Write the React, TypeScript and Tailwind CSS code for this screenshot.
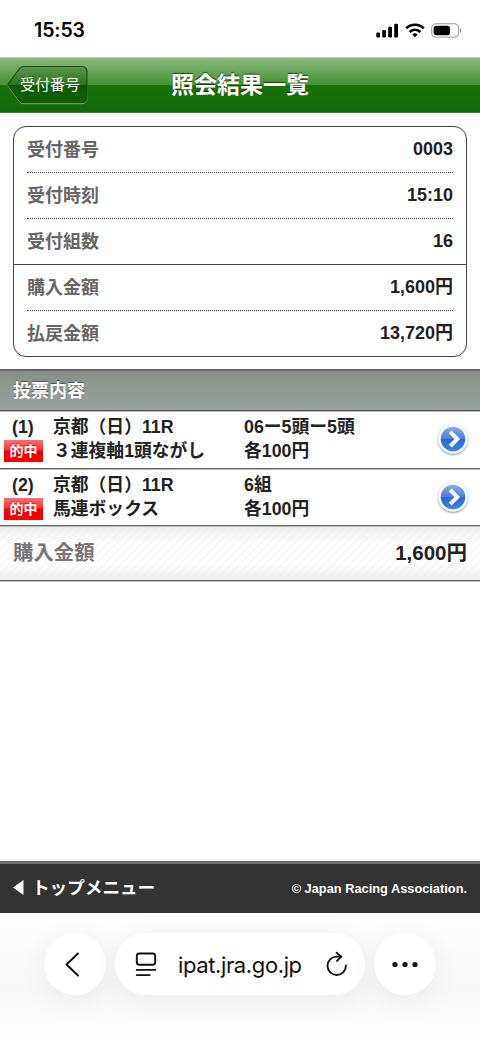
import { useState } from 'react';

interface SummaryItem {
  label: string;
  value: string;
}

interface Bet {
  no: number;
  race: string;
  type: string;
  selection: string;
  amount: string;
}

const receipt: SummaryItem[] = [
  { label: '受付番号', value: '0003' },
  { label: '受付時刻', value: '15:10' },
  { label: '受付組数', value: '16' },
];

const money: SummaryItem[] = [
  { label: '購入金額', value: '1,600円' },
  { label: '払戻金額', value: '13,720円' },
];

const bets: Bet[] = [
  { no: 1, race: '京都（日）11R', type: '３連複軸1頭ながし', selection: '06ー5頭ー5頭', amount: '各100円' },
  { no: 2, race: '京都（日）11R', type: '馬連ボックス', selection: '6組', amount: '各100円' },
];

const StatusBar = () => (
  <div className="flex h-[57px] items-center justify-between pt-[3px] pr-[18px] pl-[34px]">
    <span className="pt-px font-['Inter',sans-serif] text-[19.5px] leading-none font-semibold tracking-[-0.1px] text-black">15:53</span>
    <div className="flex items-center gap-[6px]">
      <svg width="23" height="15" viewBox="0 0 23 15" fill="#000">
        <rect x="0.3" y="9.4" width="3.8" height="5" rx="1.2" />
        <rect x="6.2" y="7" width="3.8" height="7.4" rx="1.2" />
        <rect x="12.2" y="3.8" width="3.8" height="10.6" rx="1.2" />
        <rect x="18.2" y="0.8" width="3.8" height="13.6" rx="1.2" />
      </svg>
      <svg width="20" height="15" viewBox="0 0 20 15" fill="none" stroke="#000" strokeWidth="2.6">
        <path d="M1.2 5.4a12.4 12.4 0 0 1 17.6 0" />
        <path d="M4.6 9a7.6 7.6 0 0 1 10.8 0" />
        <path d="M10 14.3l-2.8-2.8a4 4 0 0 1 5.6 0z" fill="#000" stroke="none" />
      </svg>
      <svg width="31" height="15" viewBox="0 0 31 15" fill="none">
        <rect x="0.7" y="0.8" width="27" height="13.4" rx="4.4" stroke="#9a9a9a" strokeWidth="1.1" />
        <rect x="2.6" y="2.7" width="16.4" height="9.6" rx="2.8" fill="#000" />
        <path d="M29 5.2v4.6c1.7-.7 1.7-3.9 0-4.6z" fill="#8a8a8a" />
      </svg>
    </div>
  </div>
);

const Header = () => (
  <header className="relative flex h-[56px] items-center justify-center border-t border-b border-t-[#b5d3ae] border-b-[#56714f] bg-[linear-gradient(180deg,#89ba7e_0%,#43912f_50%,#187209_50%,#126a08_100%)]">
    <button className="absolute top-[7px] left-[6px] h-[41px] w-[83px]">
      <svg className="absolute inset-0" width="83" height="41" viewBox="0 0 83 41">
        <defs>
          <linearGradient id="back" x1="0" y1="0" x2="0" y2="1">
            <stop offset="0" stopColor="#5d9850" />
            <stop offset="0.5" stopColor="#2a7519" />
            <stop offset="0.51" stopColor="#0e5905" />
            <stop offset="1" stopColor="#125f06" />
          </linearGradient>
        </defs>
        <path d="M17.5 2H76a5 5 0 0 1 5 5V33a5 5 0 0 1-5 5H17.5c-2 0-3-.8-4.2-2.3L1.8 20L13.3 4.3C14.5 2.8 15.5 2 17.5 2z" transform="translate(0 .7)" fill="none" stroke="#76ae69" />
        <path d="M17.5 1.5H76a5 5 0 0 1 5 5V32.5a5 5 0 0 1-5 5H17.5c-2 0-3-.8-4.2-2.3L1.8 19.5L13.3 3.8C14.5 2.3 15.5 1.5 17.5 1.5z" fill="url(#back)" stroke="#18500c" strokeWidth="1.2" />
      </svg>
      <span className="relative block pb-[3px] pl-[5px] text-[15px] leading-[37px] text-white">受付番号</span>
    </button>
    <h1 className="text-[23px] leading-none font-bold text-white [text-shadow:0_-1px_1px_rgba(0,0,0,0.6)]">照会結果一覧</h1>
  </header>
);

const SummaryRows = ({ items }: { items: SummaryItem[] }) => (
  <dl className="px-[13px]">
    {items.map((item) => (
      <div
        key={item.label}
        className="flex h-[46px] items-center justify-between border-b border-dotted border-[#444] text-[18px] font-bold last:h-[45px] last:border-b-0"
      >
        <dt className="pt-px text-[#666]">{item.label}</dt>
        <dd className="text-[#222]">{item.value}</dd>
      </div>
    ))}
  </dl>
);

const ArrowButton = ({ id }: { id: number }) => (
  <svg width="34" height="34" viewBox="0 0 34 34" className="mt-[2px] shrink-0">
    <defs>
      <linearGradient id={`arrow${id}`} x1="0" y1="0" x2="0" y2="1">
        <stop offset="0" stopColor="#87aeea" />
        <stop offset="0.48" stopColor="#4a82dc" />
        <stop offset="0.5" stopColor="#2967d2" />
        <stop offset="1" stopColor="#3f86ea" />
      </linearGradient>
      <filter id={`shadow${id}`} x="-20%" y="-20%" width="140%" height="150%">
        <feDropShadow dx="0" dy="0.8" stdDeviation="1.2" floodColor="#000" floodOpacity="0.6" />
      </filter>
    </defs>
    <circle cx="17" cy="16" r="14.5" fill="#fff" filter={`url(#shadow${id})`} />
    <circle cx="17" cy="16" r="12.3" fill={`url(#arrow${id})`} />
    <path d="M14.3 8.9l7 7.1l-7 7.1" fill="none" stroke="#fff" strokeWidth="4" />
  </svg>
);

const BetRow = ({ bet }: { bet: Bet }) => (
  <li className="relative flex h-[58px] items-center border-b border-[#666] pr-[10px] pb-px text-[17.8px] leading-6 font-bold text-[#222] shadow-[0_1px_0_#bbb] last:h-[57px]">
    <div className="w-[53px] shrink-0">
      <div className="pl-[12px]">({bet.no})</div>
      <div className="flex h-6 items-center pl-[4px]">
        <span className="flex h-[22px] w-[39px] items-center justify-center bg-[linear-gradient(180deg,#ff7070_0%,#ff3030_45%,#f80000_50%,#ff0000_100%)] text-[14px] leading-none text-white [text-shadow:0_-1px_1px_rgba(120,0,0,0.5)]">
          的中
        </span>
      </div>
    </div>
    <div className="w-[191px] shrink-0 whitespace-nowrap">
      <div>{bet.race}</div>
      <div>{bet.type}</div>
    </div>
    <div className="flex-1 whitespace-nowrap">
      <div>{bet.selection}</div>
      <div>{bet.amount}</div>
    </div>
    <ArrowButton id={bet.no} />
  </li>
);

const BrowserBar = ({ url }: { url: string }) => (
  <div className="flex h-[127px] items-start justify-center gap-[9px] bg-[linear-gradient(180deg,#fefefe,#fafafa_35%,#f8f8f8_60%,#fefefe)] pt-[20px]">
    <button className="flex size-[62px] items-center justify-center rounded-full bg-white shadow-[0_6px_30px_rgba(0,0,0,0.06)]">
      <svg width="24" height="26" viewBox="0 0 24 26" fill="none" stroke="#111" strokeWidth="2" strokeLinecap="round" strokeLinejoin="round">
        <path d="M15 2.5L3.5 13.5L15 24.5" />
      </svg>
    </button>
    <div className="flex h-[62px] w-[250px] items-center rounded-full bg-white pl-[20px] shadow-[0_6px_30px_rgba(0,0,0,0.06)]">
      <svg width="22" height="26" viewBox="0 0 22 26" fill="none" stroke="#111" strokeWidth="1.9" strokeLinecap="round">
        <rect x="1.8" y="2.5" width="18.4" height="11.3" rx="2.5" />
        <path d="M1.7 18.9h18.600M1.7 24.1h13" />
      </svg>
      <span className="ml-[21px] w-[125px] pt-px font-['Inter',sans-serif] text-[22px] leading-none tracking-[-0.38px] whitespace-nowrap text-[#111]">{url}</span>
      <svg className="ml-[23px]" width="22" height="26" viewBox="0 0 22 26" fill="none" stroke="#111" strokeWidth="1.9" strokeLinecap="round" strokeLinejoin="round">
        <path d="M19.9 14.5a9.2 9.2 0 1 1-9.2-8.900h4.5" />
        <path d="M10.7 1.700l4.500 3.900l-4.200 4.200" />
      </svg>
    </div>
    <button className="flex size-[62px] items-center justify-center rounded-full bg-white shadow-[0_6px_30px_rgba(0,0,0,0.06)]">
      <svg width="28" height="8" viewBox="0 0 28 8" fill="#111">
        <circle cx="4" cy="4.500" r="2.6" />
        <circle cx="14" cy="4.500" r="2.6" />
        <circle cx="24" cy="4.500" r="2.6" />
      </svg>
    </button>
  </div>
);

export default function App() {
  const [total] = useState('1,600円');

  return (
    <div className="flex h-[1040px] w-[480px] flex-col overflow-hidden bg-white font-['Liberation_Sans','Noto_Sans_CJK_JP',sans-serif]">
      <StatusBar />
      <Header />

      <main className="flex-1">
        {/* Receipt summary */}
        <section className="mx-[13px] mt-[13px] h-[231px] rounded-[13px] border border-[#444]">
          <SummaryRows items={receipt} />
          <div className="border-t border-[#444]">
            <SummaryRows items={money} />
          </div>
        </section>

        {/* Bets */}
        <section className="mt-[12px]">
          <h2 className="relative h-[42px] border-t-2 border-b border-t-[#636363] border-b-[#555] bg-[linear-gradient(180deg,#899089,#9aa39f)] pl-[13px] text-[18px] leading-[40px] font-bold text-white shadow-[0_1px_0_#bbb] [text-shadow:0_-1px_1px_rgba(0,0,0,0.45)]">
            投票内容
          </h2>
          <ul>
            {bets.map((bet) => (
              <BetRow key={bet.no} bet={bet} />
            ))}
          </ul>
          <div className="flex h-[55px] items-center justify-between border-b border-[#666] bg-[linear-gradient(180deg,rgba(232,232,232,0.8),rgba(255,255,255,0)_30%,rgba(255,255,255,0)_70%,rgba(232,232,232,0.7)),repeating-linear-gradient(135deg,#ffffff_0px,#fdfdfd_3px,#f8f8f8_4px,#fafafa_6px)] px-[13px] pt-px font-bold shadow-[0_1px_0_#bbb]">
            <span className="text-[20.4px] text-[#777]">購入金額</span>
            <span className="text-[20.5px] text-[#222]">{total}</span>
          </div>
        </section>
      </main>

      <footer className="flex h-[52px] items-center justify-between border-t-[3px] border-[#707070] bg-[#333] px-[13px] font-bold text-white">
        <a className="flex items-center gap-[8px] text-[17.6px]">
          <svg width="11" height="16" viewBox="0 0 11 16" fill="#fff">
            <path d="M10.5 0v15L0 7.500z" />
          </svg>
          トップメニュー
        </a>
        <small className="text-[12.8px]">© Japan Racing Association.</small>
      </footer>

      <BrowserBar url="ipat.jra.go.jp" />
    </div>
  );
}
